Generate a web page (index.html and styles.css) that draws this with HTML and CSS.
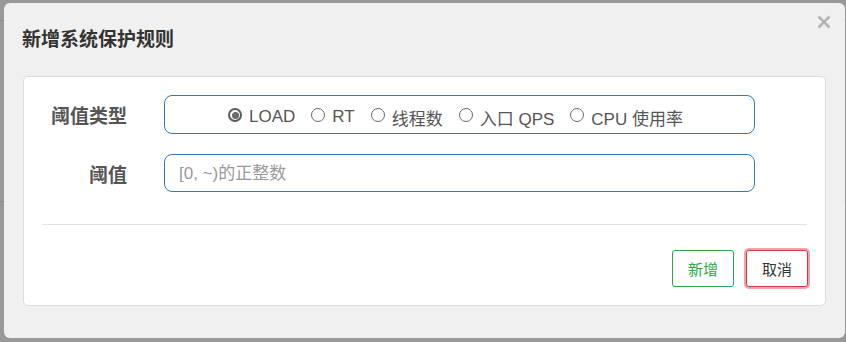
FILE: index.html
```html
<!DOCTYPE html>
<html lang="zh-CN">
<head>
<meta charset="utf-8">
<title>新增系统保护规则</title>
<link rel="stylesheet" href="styles.css">
</head>
<body>
<div class="dialog">
  <div class="dialog-header">
    <h3 class="dialog-title">新增系统保护规则</h3>
    <button class="close" type="button" aria-label="关闭">
      <svg viewBox="0 0 14 14" width="14" height="14"><path d="M1.5 1.5 L12.5 12.5 M12.5 1.5 L1.5 12.5" stroke="#b3b3b3" stroke-width="2.6" stroke-linecap="butt" fill="none"/></svg>
    </button>
  </div>
  <div class="panel">
    <div class="form">
      <div class="form-row">
        <label class="form-label">阈值类型</label>
        <div class="radio-box">
          <span class="radio-item"><span class="radio checked"></span>LOAD</span>
          <span class="radio-item"><span class="radio"></span>RT</span>
          <span class="radio-item"><span class="radio"></span>线程数</span>
          <span class="radio-item"><span class="radio"></span>入口 QPS</span>
          <span class="radio-item"><span class="radio"></span>CPU 使用率</span>
        </div>
      </div>
      <div class="form-row">
        <label class="form-label">阈值</label>
        <input class="text-input" type="text" placeholder="[0, ~)的正整数">
      </div>
    </div>
    <div class="divider"></div>
    <div class="footer">
      <button class="btn btn-add" type="button">新增</button>
      <button class="btn btn-cancel" type="button">取消</button>
    </div>
  </div>
</div>
</body>
</html>
```

FILE: styles.css
```css
html, body {
  margin: 0;
  padding: 0;
}
body {
  width: 846px;
  height: 342px;
  overflow: hidden;
  background-color: #999999;
  background-image:
    linear-gradient(to bottom, transparent 20px, #8c8c8c 20px, #8c8c8c 21px, transparent 21px),
    linear-gradient(to bottom, transparent 201px, #8c8c8c 201px, #8c8c8c 202px, transparent 202px);
  font-family: "Liberation Sans", Arial, "Noto Sans CJK SC", sans-serif;
  color: #555;
}
.dialog {
  position: relative;
  margin: 3px 0 0 4px;
  width: 841px;
  height: 335px;
  box-sizing: border-box;
  background: #f0f0f0;
  border-radius: 6px;
}
.dialog-header {
  height: 73px;
  display: flex;
  align-items: center;
  padding: 0 18px;
  box-sizing: border-box;
}
.dialog-title {
  margin: 0;
  padding-top: 1px;
  font-size: 19px;
  font-weight: bold;
  color: #333;
  line-height: 26px;
}
.close {
  position: absolute;
  top: 12px;
  right: 14px;
  width: 14px;
  height: 14px;
  padding: 0;
  border: 0;
  background: none;
  display: block;
}
.close svg {
  display: block;
}
.panel {
  margin: 0 19px;
  background: #fff;
  border: 1px solid #dcdcdc;
  border-radius: 5px;
  padding: 18px 0 18px 0;
}
.form {
  display: flex;
  flex-direction: column;
  gap: 20px;
}
.form-row {
  display: flex;
  align-items: flex-start;
  gap: 37px;
}
.form-label {
  width: 103px;
  flex: none;
  text-align: right;
  font-size: 19px;
  font-weight: bold;
  color: #555;
  line-height: 26px;
  padding-top: 9px;
}
.radio-box {
  width: 591px;
  height: 39px;
  box-sizing: border-box;
  border: 1px solid #337ab7;
  border-radius: 8px;
  display: flex;
  align-items: center;
  justify-content: center;
  gap: 16px;
  padding: 5px 8px 0 0;
  font-size: 17px;
  color: #555;
}
.radio-item {
  display: flex;
  align-items: center;
  white-space: nowrap;
}
.radio {
  width: 14px;
  height: 14px;
  box-sizing: border-box;
  border: 1px solid #6a6a6a;
  border-radius: 50%;
  margin-right: 7px;
  margin-top: -4px;
  position: relative;
  flex: none;
}
.radio.checked {
  border: 2px solid #5a5a5a;
}
.radio.checked::after {
  content: "";
  position: absolute;
  left: 1.5px;
  top: 1.5px;
  width: 7px;
  height: 7px;
  border-radius: 50%;
  background: #6a6a6a;
}
.text-input {
  width: 591px;
  height: 38px;
  box-sizing: border-box;
  border: 1px solid #337ab7;
  border-radius: 8px;
  padding: 2px 14px 0;
  font-family: inherit;
  font-size: 17px;
  color: #555;
  background: #fff;
  outline: none;
}
.text-input::placeholder {
  color: #999;
}
.divider {
  margin: 32px 18px 0;
  height: 1px;
  background: #e3e3e3;
}
.footer {
  margin-top: 25px;
  display: flex;
  justify-content: flex-end;
  gap: 12px;
  padding-right: 17px;
}
.btn {
  width: 62px;
  height: 37px;
  box-sizing: border-box;
  background: #fff;
  border-radius: 3px;
  font-family: inherit;
  font-size: 15px;
  padding: 0;
  cursor: pointer;
}
.btn-add {
  border: 1px solid #28a745;
  color: #28a745;
}
.btn-cancel {
  border: 1px solid #dc3545;
  color: #333;
  box-shadow: 0 0 0 2px rgba(220, 53, 69, 0.45);
}
```
